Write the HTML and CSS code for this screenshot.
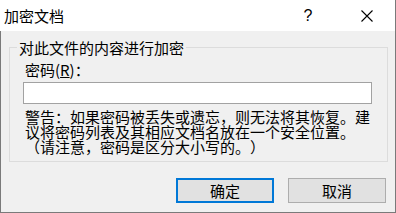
FILE: index.html
```html
<!DOCTYPE html>
<html lang="zh-CN">
<head>
    <meta charset="UTF-8">
    <title>加密文档</title>
    <link rel="stylesheet" href="styles.css">
</head>
<body>

    <div class="window">
        <div class="titlebar">
            <span class="title">加密文档</span>
            <span class="tb-btn help">?</span>
            <span class="tb-btn close">
                <svg width="12" height="12" viewBox="0 0 12 12">
                    <path d="M0.5 0.5 L11.5 11.5 M11.5 0.5 L0.5 11.5" stroke="#000" stroke-width="1.1" fill="none"/>
                </svg>
            </span>
        </div>

        <div class="dlg-body">
            <fieldset class="group">
                <legend>对此文件的内容进行加密</legend>
                <label class="pwd-label" for="pwd">密码(<u>R</u>)：</label>
                <input class="pwd-input" id="pwd" type="password">
                <p class="warning">警告：如果密码被丢失或遗忘，则无法将其恢复。建议将密码列表及其相应文档名放在一个安全位置。<br>（请注意，密码是区分大小写的。）</p>
            </fieldset>

            <div class="buttons">
                <button class="btn default">确定</button>
                <button class="btn">取消</button>
            </div>
        </div>
    </div>

</body>
</html>
```

FILE: styles.css
```css
/* reset */
* {
    margin: 0;
    padding: 0;
    box-sizing: border-box;
}

body {
    background: #fff;
    font-family: "Noto Sans CJK SC", "Noto Sans", sans-serif;
    font-size: 15px;
    line-height: 15px;
    color: #000;
    text-spacing-trim: space-all;
}

/* window frame */
.window {
    width: 396px;
    height: 213px;
    display: flex;
    flex-direction: column;
    border-right: 1px solid #7a7a7a;
    border-bottom: 1px solid #7a7a7a;
}

.titlebar {
    height: 31px;
    flex: none;
    display: flex;
    align-items: center;
    background: #fff;
    padding-left: 4px;
}

.title {
    flex: 1;
    padding-bottom: 1px;
}

.tb-btn {
    width: 58px;
    height: 31px;
    display: flex;
    align-items: center;
    justify-content: center;
}

.help {
    font-family: "Liberation Sans", sans-serif;
    font-size: 16px;
}

.close svg {
    display: block;
    margin-left: 1px;
}

/* dialog content */
.dlg-body {
    flex: 1;
    background: #f0f0f0;
    border-left: 1px solid #7a7a7a;
    display: flex;
    flex-direction: column;
}

.group {
    width: 377px;
    margin: 9px 0 0 8px;
    border: 1px solid #dcdcdc;
    padding: 7px 12px 7px 13px;
}

.group legend {
    padding: 0 2px;
    margin-left: -6px;
}

.pwd-label {
    display: block;
    margin-left: 2px;
}

.pwd-input {
    display: block;
    width: 349px;
    height: 22px;
    margin-top: 5px;
    border: 1px solid #a2a2a2;
    background: #fff;
    outline: none;
}

.warning {
    width: 350px;
    margin: 5px 0 0 2px;
}

/* buttons */
.buttons {
    display: flex;
    justify-content: flex-end;
    gap: 14px;
    margin-top: 16px;
    padding-right: 9px;
}

.btn {
    width: 98px;
    height: 25px;
    border: 1px solid #adadad;
    background: #e1e1e1;
    font-family: inherit;
    font-size: 15px;
    line-height: 15px;
    color: #000;
}

.btn.default {
    border: 2px solid #0078d7;
}
```
